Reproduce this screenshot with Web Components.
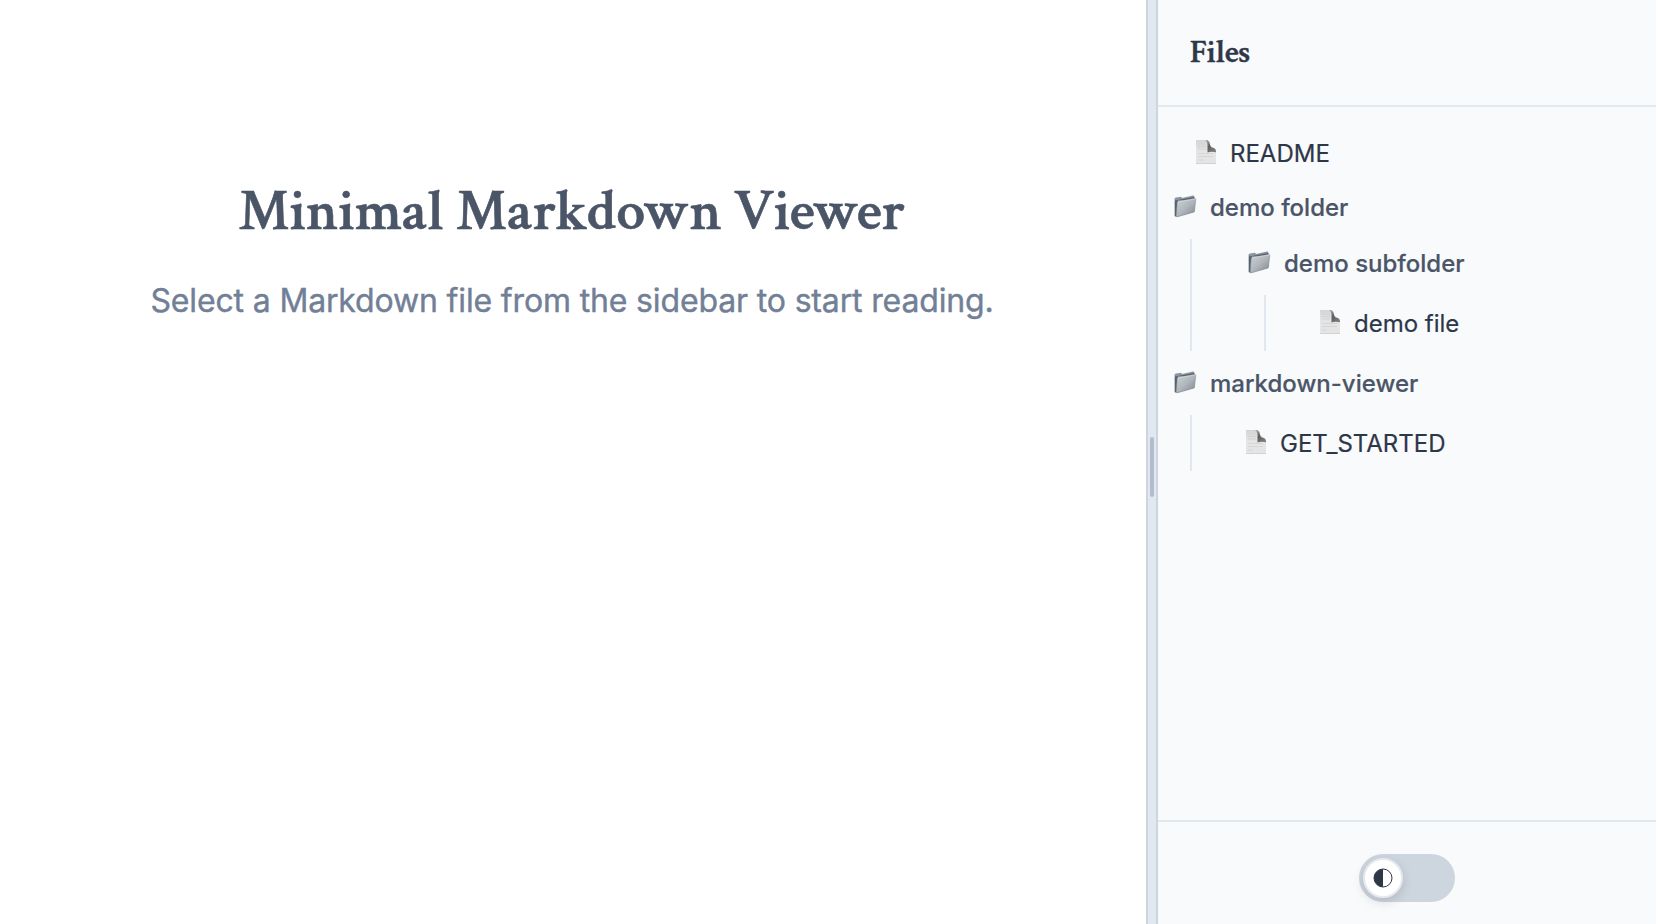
<!DOCTYPE html>
<html lang="en">
<head>
<meta charset="utf-8">
<title>Minimal Markdown Viewer</title>
<style>
html,body{margin:0;height:100%;background:#fff}
body{overflow:hidden;font-family:Inter,"Liberation Sans",sans-serif;color:#2d3748}
</style>
</head>
<body>
<viewer-app>
  <welcome-pane slot="main">
    <span slot="title">Minimal Markdown Viewer</span>
    <span slot="hint">Select a Markdown file from the sidebar to start reading.</span>
  </welcome-pane>
  <pane-resizer slot="resizer"></pane-resizer>
  <file-sidebar slot="sidebar">
    <span slot="heading">Files</span>
    <tree-file class="root">README</tree-file>
    <tree-folder class="root-folder" name="demo folder">
      <tree-folder name="demo subfolder">
        <tree-file>demo file</tree-file>
      </tree-folder>
    </tree-folder>
    <tree-folder class="root-folder" name="markdown-viewer">
      <tree-file>GET_STARTED</tree-file>
    </tree-folder>
    <theme-toggle slot="footer"></theme-toggle>
  </file-sidebar>
</viewer-app>
<script>
const define = (name, html) => customElements.define(name, class extends HTMLElement {
  constructor() {
    super();
    const t = document.createElement('template');
    t.innerHTML = html;
    this.attachShadow({mode: 'open'}).append(t.content.cloneNode(true));
  }
  connectedCallback() {
    const label = this.shadowRoot.querySelector('.name');
    if (label) label.textContent = this.getAttribute('name');
  }
});

define('viewer-app', `<style>
:host{display:grid;grid-template-columns:1146px 12px 1fr;height:100vh}
::slotted(*){min-width:0}
</style><slot name="main"></slot><slot name="resizer"></slot><slot name="sidebar"></slot>`);

define('welcome-pane', `<style>
:host{display:flex;flex-direction:column;align-items:center;padding:177px 2px 0 0;box-sizing:border-box;background:#fff;white-space:nowrap}
h1{margin:0;font:600 57.6px/70px "Crimson Text","Crimson Pro","Liberation Serif",serif;color:#4a5568;-webkit-text-stroke:.6px #4a5568}
p{margin:30px 0 0;font-size:32px;line-height:48px;letter-spacing:-.15px;color:#718096;-webkit-text-stroke:.4px #718096}
</style><h1><slot name="title"></slot></h1><p><slot name="hint"></slot></p>`);

define('pane-resizer', `<style>
:host{display:flex;align-items:center;justify-content:center;box-sizing:border-box;background:#e2e8f0;border:solid #cdd5df;border-width:0 2px;padding-top:10px}
i{width:4px;height:60px;border-radius:2px;background:#b3bccc}
</style><i></i>`);

define('file-sidebar', `<style>
:host{display:flex;flex-direction:column;background:#f9fafc;white-space:nowrap}
header{height:105px;display:flex;align-items:center;padding-left:32px;border-bottom:2px solid #e2e8f0}
h2{margin:0;font:600 32px/40px "Crimson Text","Crimson Pro","Liberation Serif",serif;color:#2d3748;-webkit-text-stroke:.5px #2d3748}
nav{flex:1;padding:18px 16px 0}
footer{height:104px;box-sizing:border-box;display:flex;justify-content:center;padding-top:32px;border-top:2px solid #e2e8f0}
::slotted(.root){margin:0 0 2px 20px}
::slotted(.root-folder){margin-bottom:8px}
</style><header><h2><slot name="heading"></slot></h2></header><nav><slot></slot></nav><footer><slot name="footer"></slot></footer>`);

define('tree-file', `<style>
:host{display:flex;align-items:center;height:56px;padding-left:2px;margin-left:52px;font-size:24px;line-height:36px;color:#2d3748;-webkit-text-stroke:.2px #2d3748}
svg{flex:none;width:20px;height:24px;margin:0 14px 2px 0}
span{padding-top:2px}
</style><svg viewBox="0 0 20 24"><defs>
<linearGradient id="p" x2="0" y2="1"><stop stop-color="#d5d5d5"/><stop offset=".5" stop-color="#e6e6e6"/><stop offset="1" stop-color="#e4e4e4"/></linearGradient>
<linearGradient id="c" x1="0" y1="0" x2=".75" y2="1"><stop stop-color="#bbb"/><stop offset=".5" stop-color="#5c5c5c"/><stop offset="1" stop-color="#808080"/></linearGradient></defs>
<path d="M0 0H10L14 5L20 9.500V24H0Z" fill="url(#p)"/><path d="M0 23.500H20" stroke="#d2d2d2"/>
<path d="M2 4H9M2 6.500H10M2 9H10M2 13.500H17M2 16.500H17M2 20H7" stroke="#cfcfcf" stroke-width=".7"/>
<path d="M9 0Q11.500 1.500 11.500 5.500V12.500Q14.500 11 20 12.200Q20.200 8.500 17 7.700Q14.300 7.500 14 4.500Q14 1.500 11.500 0Z" fill="url(#c)"/></svg><span><slot></slot></span>`);

define('tree-folder', `<style>
:host{display:block}
.row{display:flex;align-items:center;height:48px;padding-bottom:8px;font-size:24px;line-height:36px;font-weight:500;color:#4a5568;-webkit-text-stroke:.2px #4a5568}
svg{flex:none;width:23px;height:23px;margin:0 13px 2px 0}
.name{padding-top:2px}
.kids{margin-left:16px;border-left:2px solid #e2e8f0}
::slotted(tree-folder){margin-left:56px}
</style><div class="row"><svg viewBox="0 0 23 23"><defs><linearGradient id="f" x2="1" y2="1"><stop stop-color="#ced2d6"/><stop offset=".5" stop-color="#b0b6bb"/><stop offset="1" stop-color="#7c858c"/></linearGradient></defs>
<path d="M.5 4Q.5 2.500 2 2.400L7 1.800L8 3L19 .6Q20.500.5 20.300 2V17L2 22L.5 21Z" fill="#8c959e"/>
<path d="M1 5.500L20.500 2V5H4L2.500 21H1Z" fill="#56616c"/>
<path d="M3.200 7.500Q3.300 6.500 4.300 6.300L20.500 3.600Q22 3.400 21.800 4.600L20.500 16Q20.300 17 19.300 17.300L3 21.900Q2 22 2.200 21Z" fill="url(#f)" stroke="#7f8991" stroke-width=".5"/>
<path d="M4 7.300Q4 6.800 4.800 6.700L21.500 3.900" fill="none" stroke="#dde1e4" stroke-width=".7"/></svg><span class="name"></span></div><div class="kids"><slot></slot></div>`);

define('theme-toggle', `<style>
:host{display:block;width:96px;height:48px;padding:4px;box-sizing:border-box;border-radius:24px;background:#cdd5df}
.knob{width:40px;height:40px;box-sizing:border-box;border:2px solid #e5e9ee;border-radius:50%;background:#fff;box-shadow:0 4px 12px rgba(0,0,0,.13);display:flex;align-items:center;justify-content:center}
svg{width:20px;height:20px;margin-bottom:1px}
</style><div class="knob"><svg viewBox="0 0 20 20"><circle cx="10" cy="10" r="9" fill="#fff" stroke="#2d3748"/><path d="M10 1A9 9 0 0 0 10 19Z" fill="#2d3748"/></svg></div>`);
</script>
</body>
</html>
